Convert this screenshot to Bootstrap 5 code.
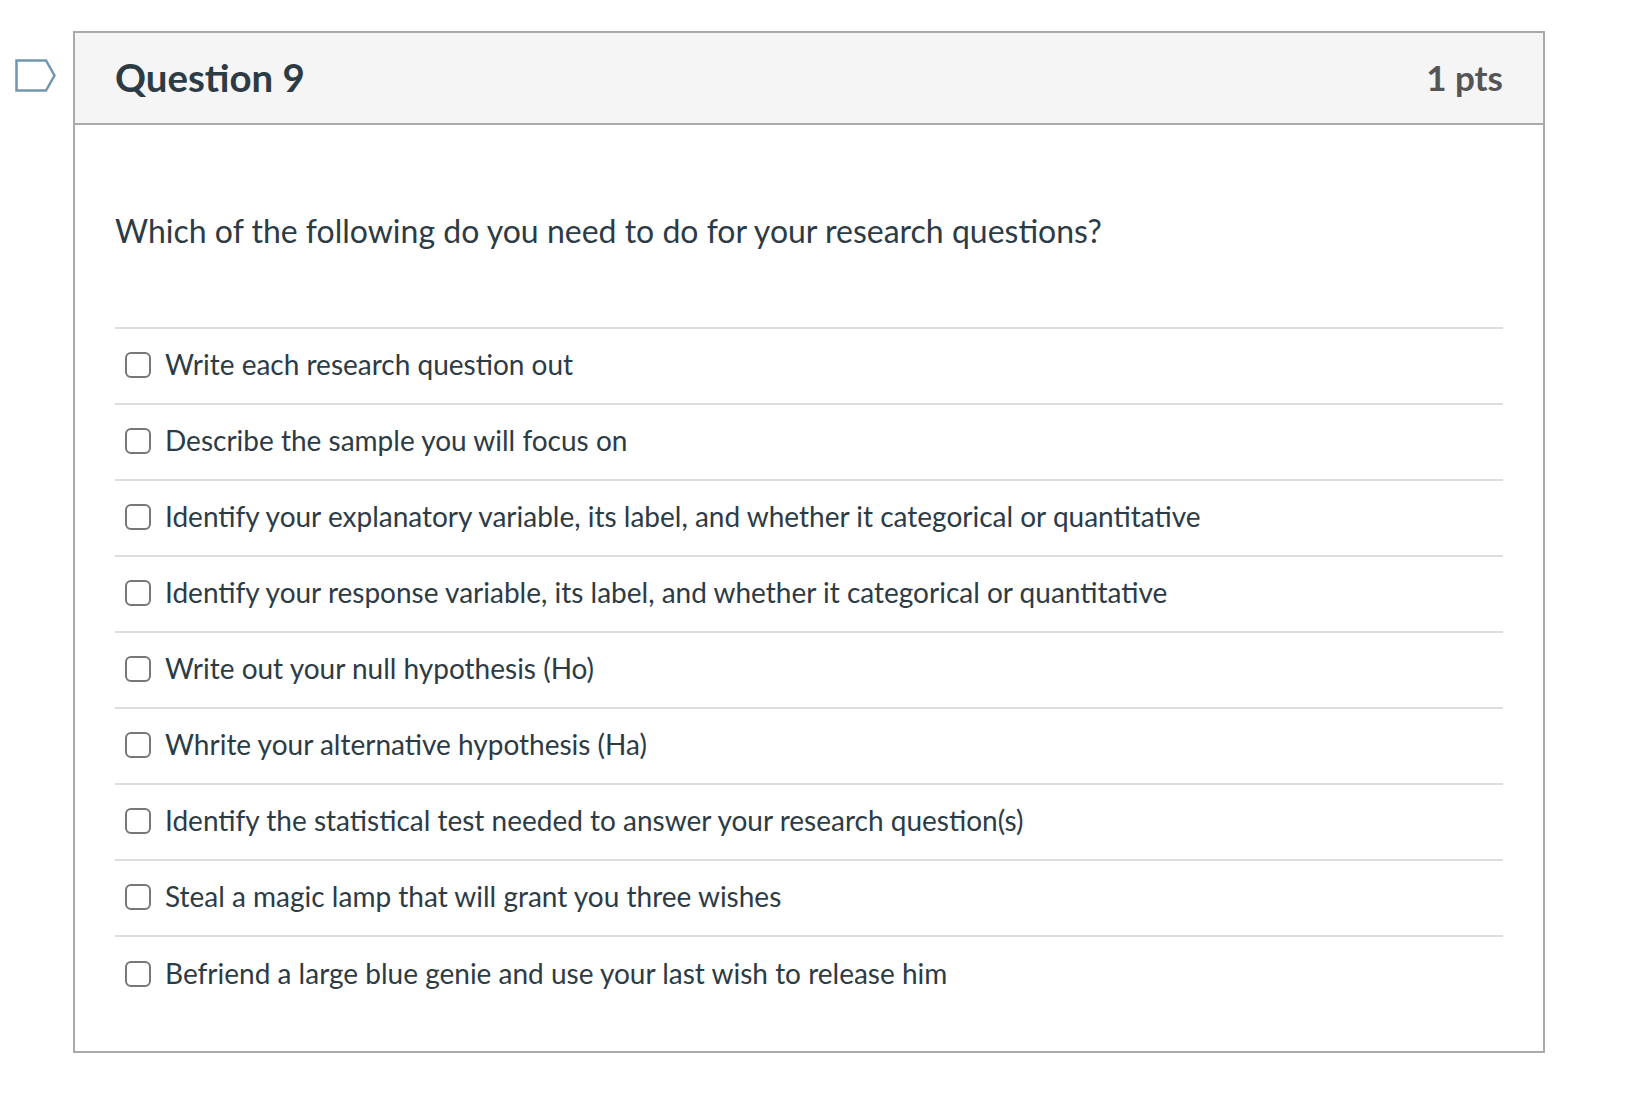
<!DOCTYPE html>
<html lang="en">
<head>
    <meta charset="UTF-8">
    <title>Question 9</title>
    <link rel="stylesheet" href="https://cdn.jsdelivr.net/npm/bootstrap@5.3.0/dist/css/bootstrap.min.css">
    <style>
        body { font-family: Lato, "Open Sans", sans-serif; color: #2d3b45; background: #fff; }
        .quiz-page { padding: 31px 0 0 15px; width: 1545px; }
        .flag-col { width: 58px; padding-top: 28px; }
        .flag-col svg { display: block; }
        .quiz-box { border: 2px solid #aaa; height: 1022px; }
        .quiz-head { background: #f5f5f5; border-bottom: 2px solid #aaa; height: 92px; padding: 0 40px; }
        .quiz-title { font-size: 38.4px; font-weight: 700; line-height: 1; margin: 0 0 2px; color: #2d3b45; }
        .quiz-pts { font-size: 35px; font-weight: 700; color: #555; line-height: 1; margin-bottom: 2px; }
        .quiz-body { padding: 0 40px; }
        .quiz-text { font-size: 32px; line-height: 40px; margin: 0; padding-top: 86px; height: 202px; }
        .answer-list { border-top: 2px solid #ddd; }
        .answer-row { height: 76px; padding: 0 0 5px 10px; gap: 14px; border-bottom: 2px solid #ddd; font-size: 28px; }
        .answer-row:last-child { border-bottom: 0; }
        .answer-row input { appearance: none; width: 26px; height: 26px; flex: none; margin: 3px 0 0; border: 2px solid #777; border-radius: 6px; background: #fff; }
    </style>
</head>
<body>
    <div class="quiz-page d-flex">
        <div class="flag-col flex-shrink-0">
            <svg width="41" height="33" viewBox="0 0 41 33"><path d="M1.5 1.5H31L39.5 16.5L31 31.5H1.5Z" fill="#fff" stroke="#7396b0" stroke-width="2.5"/></svg>
        </div>
        <div class="quiz-box flex-grow-1">
            <div class="quiz-head d-flex justify-content-between align-items-center">
                <h2 class="quiz-title">Question 9</h2>
                <div class="quiz-pts">1 pts</div>
            </div>
            <div class="quiz-body">
                <p class="quiz-text">Which of the following do you need to do for your research questions?</p>
                <div class="answer-list" id="answers"></div>
            </div>
        </div>
    </div>

    <script>
        const answers = [
            'Write each research question out',
            'Describe the sample you will focus on',
            'Identify your explanatory variable, its label, and whether it categorical or quantitative',
            'Identify your response variable, its label, and whether it categorical or quantitative',
            'Write out your null hypothesis (Ho)',
            'Whrite your alternative hypothesis (Ha)',
            'Identify the statistical test needed to answer your research question(s)',
            'Steal a magic lamp that will grant you three wishes',
            'Befriend a large blue genie and use your last wish to release him'
        ];
        const list = document.getElementById('answers');
        answers.forEach(text => {
            list.innerHTML += `<label class="answer-row d-flex align-items-center"><input type="checkbox"><span>${text}</span></label>`;
        });
    </script>
    <script src="https://cdn.jsdelivr.net/npm/bootstrap@5.3.0/dist/js/bootstrap.bundle.min.js"></script>
</body>
</html>
